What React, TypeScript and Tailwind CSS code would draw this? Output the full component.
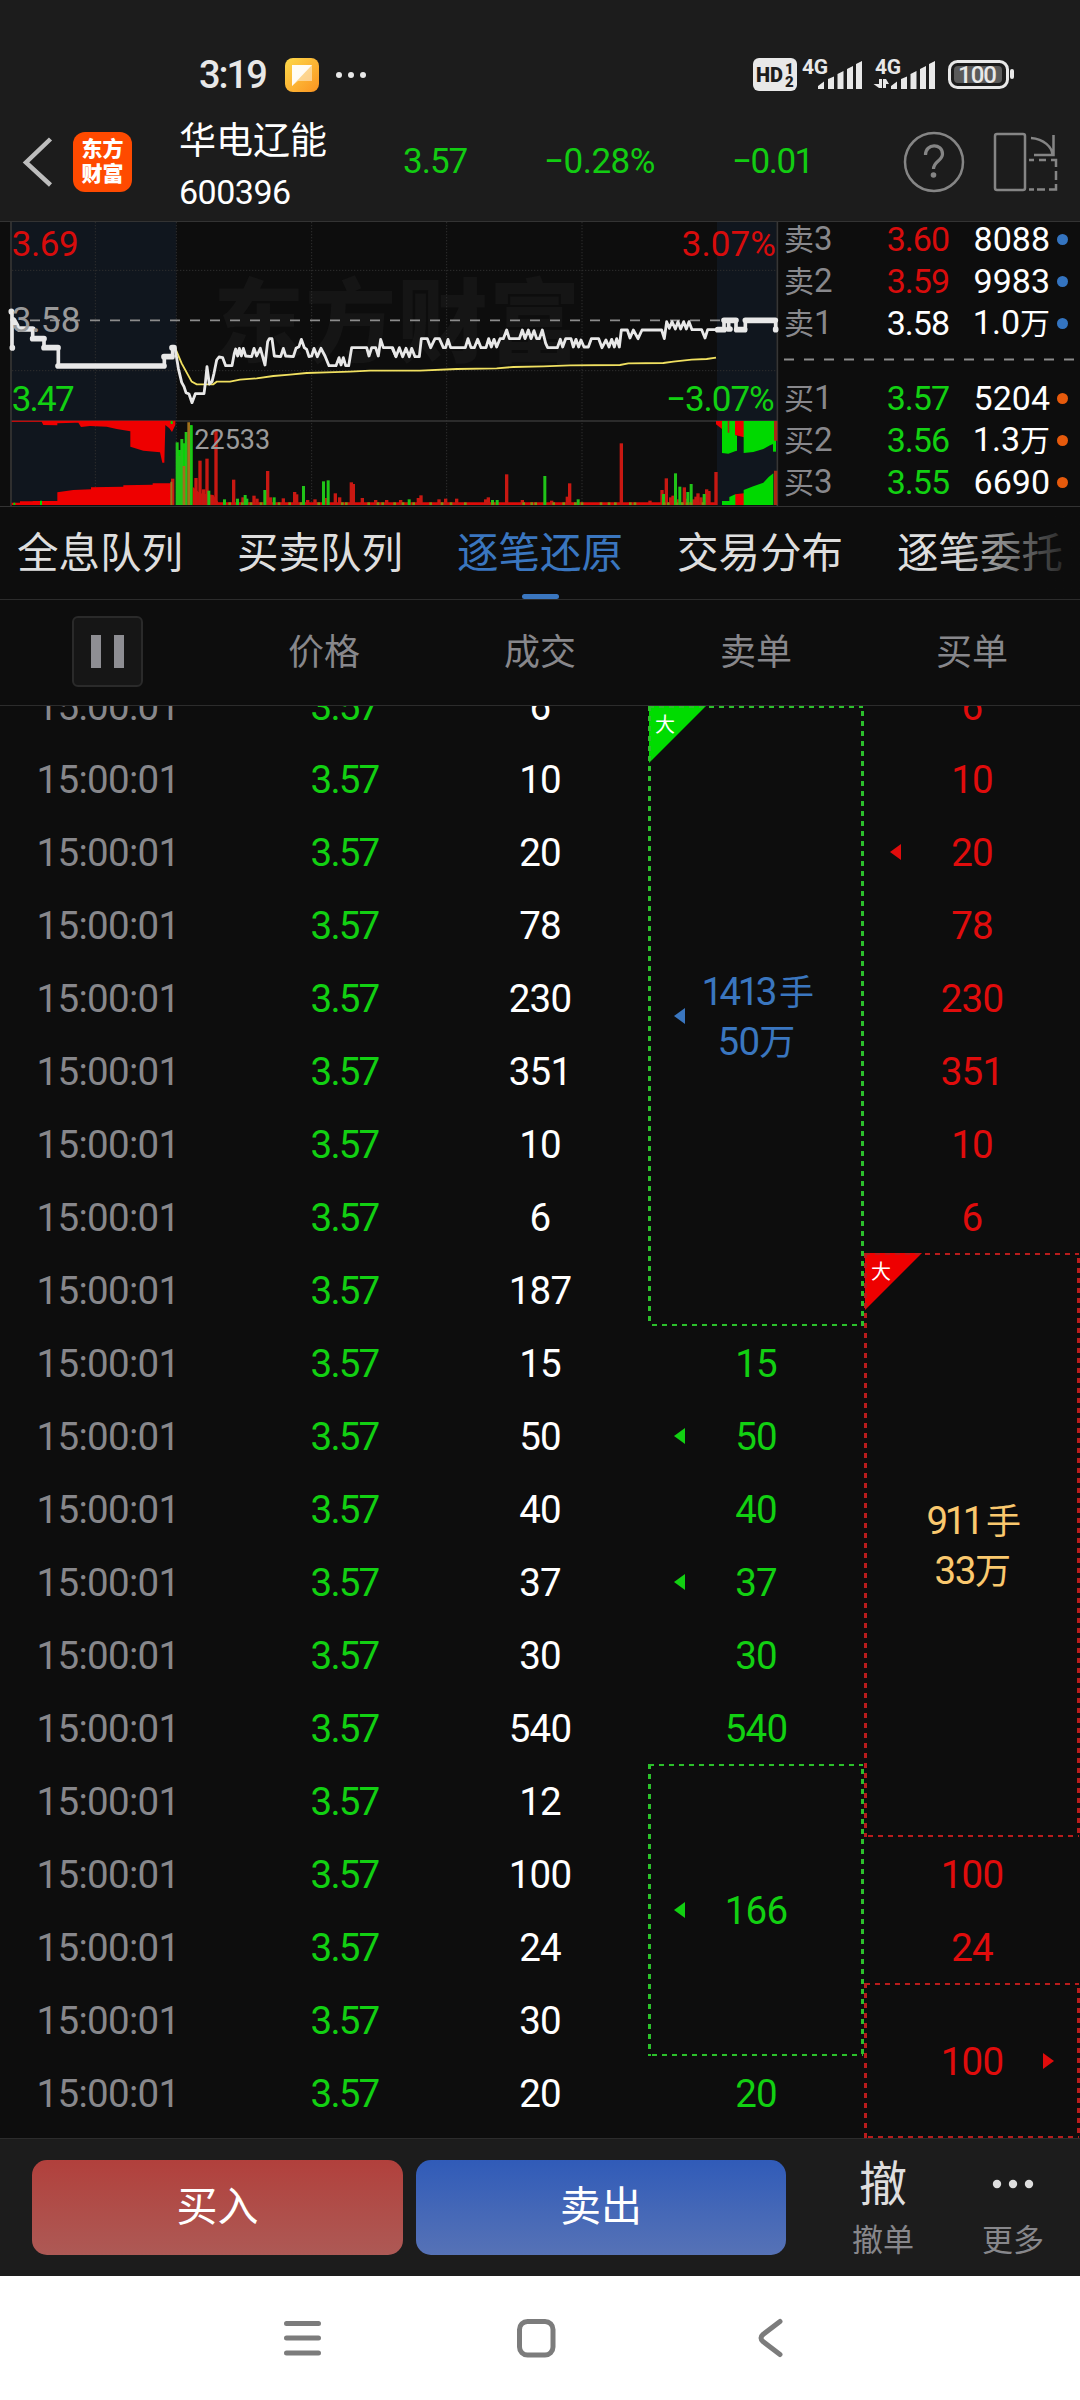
import type { ReactNode } from "react";
import clsx from "clsx";

const trades = [6, 10, 20, 78, 230, 351, 10, 6, 187, 15, 50, 40, 37, 30, 540, 12, 100, 24, 30, 20];

const asks = [
  { label: "卖", level: 3, price: "3.60", volume: "8088", unit: "", color: "text-[#d80c0c]" },
  { label: "卖", level: 2, price: "3.59", volume: "9983", unit: "", color: "text-[#d80c0c]" },
  { label: "卖", level: 1, price: "3.58", volume: "1.0", unit: "万", color: "text-white" },
];

const bids = [
  { label: "买", level: 1, price: "3.57", volume: "5204", unit: "", color: "text-[#12d012]" },
  { label: "买", level: 2, price: "3.56", volume: "1.3", unit: "万", color: "text-[#12d012]" },
  { label: "买", level: 3, price: "3.55", volume: "6690", unit: "", color: "text-[#12d012]" },
];

// volume bars, [x, top]
const redBars = [
  [518, 806], [588, 804], [600, 752], [611, 838], [621, 746], [636, 856], [648, 662], [701, 809], [729, 862], [762, 857],
  [771, 866], [803, 783], [811, 862], [850, 865], [884, 846], [890, 853], [923, 870], [945, 868], [978, 864], [1006, 850],
  [1019, 862], [1054, 817], [1060, 822], [1087, 864], [1127, 870], [1160, 870], [1202, 870], [1255, 864], [1263, 856],
  [1317, 868], [1337, 866], [1370, 866], [1457, 868], [1465, 862], [1520, 793], [1567, 870], [1655, 872], [1702, 860],
  [1709, 820], [1864, 700], [1950, 872], [1986, 840], [1999, 805], [2012, 862], [2019, 857], [2034, 868], [2053, 832],
  [2062, 866], [2080, 868], [2088, 860], [2094, 850], [2103, 862], [2120, 838], [2127, 843], [2148, 786],
];

const greenBars = [
  [532, 697], [539, 738], [546, 687], [559, 666], [573, 646], [627, 842], [674, 868], [713, 866], [736, 855], [741, 866],
  [795, 840], [823, 862], [911, 828], [971, 814], [985, 811], [1228, 868], [1478, 870], [1492, 870], [1635, 798], [1735, 868],
  [1991, 852], [2027, 790], [2040, 830], [2064, 846], [2074, 822], [2113, 852],
];

const ticks = [
  688, 726, 752, 782, 836, 868, 902, 955, 1026, 1038, 1105, 1133, 1147, 1183, 1208, 1240, 1291, 1325, 1352, 1395, 1478,
  1570, 1594, 1606, 1660, 1690, 1725, 1745, 1802, 1826, 1845, 1890, 1904, 1992, 2004, 2030, 2046, 2060, 2072, 2108,
];

function StatusBar() {
  return (
    <div className="flex h-[114px] items-center pt-9 pr-[65px] pl-[199px] text-[#e8e8e8]">
      <span className="w-[66px] text-[38px] leading-none font-medium tracking-[-2px]">3:19</span>
      <svg className="ml-5" width="34" height="34" viewBox="0 0 34 34">
        <defs>
          <linearGradient id="app" x1="0" y1="0" x2="1" y2="1">
            <stop offset="0" stopColor="#fdd94a" />
            <stop offset="1" stopColor="#fb9320" />
          </linearGradient>
        </defs>
        <rect width="34" height="34" rx="8" fill="url(#app)" />
        <path d="M7 7H27V23H13L7 28Z" fill="#fff" opacity=".45" />
        <path d="M7 7H27L7 28Z" fill="#fff" opacity=".9" />
      </svg>
      <svg className="ml-4" width="32" height="8" fill="currentColor">
        <circle cx="4" cy="4" r="3" />
        <circle cx="16" cy="4" r="3" />
        <circle cx="28" cy="4" r="3" />
      </svg>
      <svg className="ml-auto overflow-visible" width="262" height="36" viewBox="753 57 262 36" fill="currentColor" fontFamily="Roboto">
        <rect x="753" y="58" width="44" height="33" rx="6" />
        <text x="756" y="82" fontSize="20" fontWeight="900" fill="#1c1c1c" textLength="27" lengthAdjust="spacingAndGlyphs">HD</text>
        <text x="785" y="74" fontSize="15" fontWeight="900" fill="#1c1c1c">1</text>
        <text x="785" y="87" fontSize="15" fontWeight="900" fill="#1c1c1c">2</text>
        <text x="802" y="74" fontSize="21" fontWeight="700" textLength="26">4G</text>
        <Signal x={818} />
        <text x="875" y="74" fontSize="21" fontWeight="700" textLength="26">4G</text>
        <path d="M879 79V88H882V79ZM873.5 84H879V88ZM883 79H886V88H883ZM886 79L889 84H886Z" />
        <Signal x={891} />
        <rect x="949.5" y="61.5" width="58" height="26" rx="8" fill="none" stroke="currentColor" strokeWidth="3" />
        <rect x="954" y="66" width="48" height="17" rx="4" fill="#5a5a5a" />
        <rect x="1010" y="69" width="4" height="10" rx="2" />
        <text x="958" y="83" fontSize="24" fontWeight="500" textLength="39">100</text>
      </svg>
    </div>
  );
}

function Signal({ x }: { x: number }) {
  return (
    <g transform={`translate(${x} 0)`}>
      <path d="M0 89V86L6 81.500V89ZM10 89V79L16 76.500V89ZM19.500 89V74L25.500 71V89ZM29 89V69L35 66V89ZM38 89V64L44 61V89Z" />
    </g>
  );
}

function StockHeader() {
  return (
    <div className="flex h-[95px] items-center">
      <svg className="ml-[22px]" width="32" height="54" fill="none" stroke="#bdbdbd" strokeWidth="4.500">
        <path d="M28.500 4L4 27.500L28.500 50" />
      </svg>
      <div className="ml-[19px] flex h-[60px] w-[59px] flex-col items-center justify-center rounded-xl bg-[#ff4a00] text-[21px] leading-[25px] font-black text-white">
        <span>东方</span>
        <span>财富</span>
      </div>
      <div className="mt-2 ml-[47px] w-[224px] text-white">
        <div className="text-[37px] leading-[52px]">华电辽能</div>
        <div className="text-[34px] leading-[48px] tracking-[-0.5px]">600396</div>
      </div>
      <div className="mt-px flex text-[35px] text-[#12cc12]">
        <span className="w-[141px] tracking-[-1px]">3.57</span>
        <span className="w-[188px] tracking-[-0.500px] whitespace-nowrap">−0.28%</span>
        <span className="w-[171px] tracking-[-1.500px] whitespace-nowrap">−0.01</span>
      </div>
      <svg width="160" height="66" viewBox="903 129 160 66" fill="none" stroke="#858585" strokeWidth="2.500">
        <circle cx="934" cy="162" r="29" />
        <path d="M925.500 155C925.500 143 942.500 143 942.500 154C942.500 161 933.500 161 933.500 169" strokeWidth="3.200" />
        <circle cx="933.500" cy="175" r="2.800" fill="#858585" stroke="none" />
        <rect x="995" y="134" width="30" height="56" rx="2" />
        <path d="M1031 138C1044 139 1052 147 1052.500 155M1053.500 135V155H1034M1029 160H1034M1039 160H1046M1051 160H1056V167M1056 171V180M1056 184V189.500H1049M1045 189.500H1037M1034 189.500H1029" />
      </svg>
    </div>
  );
}

function PriceChart() {
  return (
    <svg width="778" height="284" viewBox="0 36 2334 852" fontFamily="Roboto" className="shrink-0 overflow-visible">
      <rect x="36" y="36" width="493" height="850" fill="#10161e" />
      <rect x="2151" y="36" width="178" height="850" fill="#10161e" />
      <text x="640" y="435" fontSize="272" fontWeight="900" fill="#151515" fontFamily="'Noto Sans CJK SC', sans-serif" textLength="1100">东方财富</text>
      <g stroke="#2e2e2e" strokeWidth="3" strokeDasharray="4 5">
        <path d="M36 181H2328M36 482H2328M286 36V885M529 36V885M935 36V885M1340 36V885M1746 36V885" />
      </g>
      <path d="M33 36V888M2332 36V888M33 633H2332" stroke="#363636" strokeWidth="5" />
      <path d="M90 331H2210" stroke="#8c8c8c" strokeWidth="5" strokeDasharray="30 30" />

      <g fill="#ee0000">
        <path d="M35 632H526V645L516 666L508 655L496 645L493 758H487L480 727L430 722L391 710V664L350 657L320 650L270 648L243 651L235 638H225L172 640V646L130 645L125 635H35Z" />
        <path d="M35 885V878H60V874H98V873H172V847L220 840L273 838V832L370 830V826L458 824V820H515V885Z" />
        <path d="M2148 633H2166V657L2148 643Z" />
        <path d="M2205 633H2232V682L2205 675ZM2205 885V853L2232 850V885Z" />
      </g>
      <g fill="#00d900">
        <path d="M2166 633H2205V724L2185 731L2166 729ZM2231 633H2325V700L2310 706L2290 717L2260 726L2231 729Z" />
        <path d="M2205 675L2211 677V722L2205 724Z" />
        <path d="M2166 885V873H2188V861L2206 853V885ZM2231 885V840L2260 829L2290 818L2306 801L2320 790V885Z" />
        <path d="M512 633H518V642H512ZM120 872H126V885H120ZM40 878H46V885H40Z" />
        <path d="M2319 690H2328V725H2319Z" />
      </g>
      <path d="M2183 633H2188V668H2183ZM2322 633H2332V692H2322ZM2322 782H2332V885H2322Z" fill="#a82a14" />
      <path d="M529 885V720H545V700H556V885ZM570 885V646H578V885Z" fill="#00d900" />
      <path d="M578 885V830L600 850L640 855L655 877H2150V885Z" fill="#dc0c08" />
      {redBars.map(([x, top]) => (
        <rect key={x} x={x - 5} y={top} width="10" height={885 - top} fill="#c81812" />
      ))}
      {greenBars.map(([x, top]) => (
        <rect key={x} x={x - 5} y={top} width="9" height={885 - top} fill="#20c418" />
      ))}
      {ticks.map((x) => (
        <rect key={x} x={x - 3} y="877" width="8" height="8" fill="#7f9410" />
      ))}
      <path d="M511 815H517V885H511ZM548 768H556V885H548ZM562 637H570V885H562Z" fill="#a0701c" />

      <path
        d="M525 413L545 460L575 515L590 523H640L650 515H690L720 509L770 505L820 498L870 494L920 489L980 487L1050 485L1110 482H1260L1370 477L1490 475L1540 471L1630 469L1710 466L1860 465L1885 460L1990 459L2020 455L2075 449L2120 447L2148 443"
        fill="none" stroke="#f0e060" strokeWidth="5.500"
      />
      <g fill="none" stroke="#e8e8e8" strokeWidth="8.500" strokeLinejoin="round">
        <path d="M525 413L535 475L545 517L552 530L558 548L567 552L576 578L586 551H612L616 520L621 470L628 522L636 515L642 490L650 450L657 441L668 443L677 467H696L703 430L707 417L713 438L718 415L724 438L730 415L737 438L755 440L762 415L770 438L781 415L788 440L795 465L803 395L808 386H816L823 438L842 440L850 415L857 438L880 440L888 415L897 410L904 388L913 413L920 418L927 440L935 438L942 415L952 440L963 415L975 438L987 467H1008L1017 443L1023 465L1030 443L1037 467H1046L1055 413H1100L1107 438L1115 413H1127L1135 438L1142 388L1150 413H1178L1188 440" />
        <g transform="translate(1170 0)">
          <path d="M6 413L18 440L28 413L38 440L48 415L58 440L65 415L75 440H88L94 386H112L122 413L135 386H148L160 413H167L174 388L182 413H226L234 386L243 413H253L263 388L273 413H288L296 386L304 411L312 388L320 411L330 386H340L350 360L358 386H388L397 360L405 386L415 360L423 386L432 362L440 386H448L457 360L467 400L473 413H502L511 388L518 411L527 386H543L550 411L558 388L566 411L573 390L582 411H595L604 386H626L636 413L648 390L657 411L665 388L673 411L680 386L688 411L694 360H712L720 384L730 360L744 386L756 360H815L823 386L830 335L838 355L846 335L856 357L864 335L872 357L881 335L889 357L897 335L906 359H935L945 384L953 359H980" />
        </g>
      </g>
      <g fill="none" stroke="#e8e8e8" strokeWidth="17" strokeLinejoin="round" strokeLinecap="round">
        <path d="M58 357H98M98 386H132M132 413H174M174 468H492M492 440H516M516 413H522" />
        <path d="M2153 359H2172M2172 331H2208M2186 357H2190M2210 359H2234M2236 331H2326M2327 357V359" />
        <path d="M34 304V305M37 413V414M40 330L50 348" />
      </g>
      <path d="M36 304V413M98 357V386M132 386V413M175 413V468M493 468V440M518 440V413M2172 331V359M2186 331V359M2208 331V359M2236 331V359M2327 331V359" stroke="#e8e8e8" strokeWidth="11" />

      <g fontSize="105">
        <text x="35" y="138" fill="#d80c0c" textLength="201">3.69</text>
        <text x="35" y="367" fill="#9a9a9a" textLength="206">3.58</text>
        <text x="35" y="603" fill="#12d012" textLength="189">3.47</text>
        <text x="2045" y="138" fill="#d80c0c" textLength="283">3.07%</text>
        <text x="1998" y="603" fill="#12d012" textLength="326">−3.07%</text>
        <text x="583" y="717" fill="#9a9a9a" fontSize="81">22533</text>
      </g>
    </svg>
  );
}

function QuoteRow({ quote, dot }: { quote: (typeof asks)[number]; dot: string }) {
  return (
    <div className="flex h-[42px] items-center">
      <span className="w-[60px] text-[30px] leading-[42px] text-[#88888c]">
        {quote.label}
        <span className="text-[33px]">{quote.level}</span>
      </span>
      <span className={clsx("w-[105px] text-right text-[34px] leading-[42px] tracking-[-1px]", quote.color)}>{quote.price}</span>
      <span className="w-[101px] text-right text-[34px] leading-[42px] whitespace-nowrap text-white">
        {quote.volume}
        {quote.unit && <span className="text-[30px]">{quote.unit}</span>}
      </span>
      <span className={clsx("ml-[7px] size-[11px] rounded-full", dot)} />
    </div>
  );
}

function OrderBook() {
  return (
    <div className="flex flex-col pl-1.5">
      <div className="-mt-1">
        {asks.map((quote) => (
          <QuoteRow key={quote.level} quote={quote} dot="bg-[#3474c0]" />
        ))}
      </div>
      <svg className="mt-[14px] mb-4" width="291" height="3">
        <path d="M0 1.500H291" stroke="#8c8c8c" strokeWidth="2" strokeDasharray="10 10" />
      </svg>
      {bids.map((quote) => (
        <QuoteRow key={quote.level} quote={quote} dot="bg-[#e65a0c]" />
      ))}
    </div>
  );
}

function Tabs() {
  const tabs = ["全息队列", "买卖队列", "逐笔还原", "交易分布", "逐笔委托"];
  return (
    <div className="relative flex h-[93px] gap-[54px] border-b border-[#2c2c2c] pl-[17px] text-[41.500px] text-[#dedede]">
      {tabs.map((tab) => (
        <div key={tab} className={clsx("flex w-[166px] shrink-0 flex-col items-center whitespace-nowrap", tab === "逐笔还原" && "text-[#3a76bf]")}>
          <span className="h-[87px] leading-[93px]">{tab}</span>
          {tab === "逐笔还原" && <span className="h-[5px] w-[37px] rounded-full bg-[#3a76bf]" />}
        </div>
      ))}
      <div className="absolute top-0 right-0 h-[90px] w-[130px] bg-linear-to-r from-transparent to-[#0d0d0d]" />
    </div>
  );
}

function ColumnTitles() {
  return (
    <div className="grid h-[106px] grid-cols-5 items-center border-b border-[#2c2c2c] text-center text-[36px] text-[#87878b]">
      <div className="mb-0.5 ml-[72px] flex h-[71px] w-[71px] items-center justify-center gap-[13px] rounded-md border-2 border-[#2a2a2a] bg-[#161616]">
        <span className="h-[33px] w-[10px] bg-[#8e8e93]" />
        <span className="h-[33px] w-[10px] bg-[#8e8e93]" />
      </div>
      <span>价格</span>
      <span>成交</span>
      <span>卖单</span>
      <span>买单</span>
    </div>
  );
}

function Arrow({ right = false }: { right?: boolean }) {
  return (
    <svg className={clsx("absolute top-1/2 -translate-y-1/2", right ? "right-[26px] rotate-180" : "left-[26px]")} width="11" height="16">
      <path d="M0 8L11 0V16Z" fill="currentColor" />
    </svg>
  );
}

function Cell({ children, arrow = false }: { children?: ReactNode; arrow?: boolean }) {
  return (
    <div className="relative flex h-[73px] items-center justify-center pt-[3px]">
      {arrow && <Arrow />}
      {children}
    </div>
  );
}

// one order filled over several trades
function OrderBox({ className, big = false, stroke, fill, children }: { className: string; big?: boolean; stroke: string; fill?: string; children: ReactNode }) {
  return (
    <div className={clsx("relative flex shrink-0 flex-col items-center justify-center pt-0.5 leading-[48px]", className)}>
      <svg className="absolute inset-0 h-full w-full">
        {big && <path d="M1 0H58L1 57Z" fill={fill} />}
        <path d="M1 1H215" stroke={stroke} strokeWidth="2" strokeDasharray="5 5" />
        <line x1="1.500" y1="0" x2="1.500" y2="100%" stroke={stroke} strokeWidth="3" strokeDasharray="5 5" />
        <line x1="214.500" y1="5" x2="214.500" y2="100%" stroke={stroke} strokeWidth="3" strokeDasharray="5 5" />
        <svg y="100%" overflow="visible">
          <path d="M4 -1H215" stroke={stroke} strokeWidth="2" strokeDasharray="5 5" />
        </svg>
      </svg>
      {big && <span className="absolute top-[7px] left-[7px] text-[20px] leading-6 text-white">大</span>}
      {children}
    </div>
  );
}

function TradeList() {
  return (
    <div className="grid h-[1432px] grid-cols-5 overflow-hidden text-[38.500px]">
      <div className="-mt-[37px] tracking-[-0.700px] text-[#87878b]">
        {trades.map((_, i) => (
          <Cell key={i}>15:00:01</Cell>
        ))}
      </div>
      <div className="-mt-[37px] pl-[41px] tracking-[-1.800px] text-[#12d012]">
        {trades.map((_, i) => (
          <Cell key={i}>3.57</Cell>
        ))}
      </div>
      <div className="-mt-[37px] tracking-[-0.800px] text-white">
        {trades.map((count, i) => (
          <Cell key={i}>{count}</Cell>
        ))}
      </div>
      <div className="flex flex-col tracking-[-0.800px] text-[#12d012]">
        <OrderBox className="h-[620px] text-[#3a76bf]" big stroke="#2bc02b" fill="#00dc00">
          <Arrow />
          <span className="tracking-[-3.500px]">1413<span className="ml-[5px] text-[35px]">手</span></span>
          <span>50<span className="text-[36px]">万</span></span>
        </OrderBox>
        <Cell>15</Cell>
        <Cell arrow>50</Cell>
        <Cell>40</Cell>
        <Cell arrow>37</Cell>
        <Cell>30</Cell>
        <Cell>540</Cell>
        <OrderBox className="h-[292px]" stroke="#2bc02b">
          <Arrow />
          <span>166</span>
        </OrderBox>
        <Cell>20</Cell>
      </div>
      <div className="-mt-[37px] flex flex-col tracking-[-0.800px] text-[#e00c0c]">
        {trades.slice(0, 8).map((count, i) => (
          <Cell key={i} arrow={i === 2}>{count}</Cell>
        ))}
        <OrderBox className="h-[584px] text-[#fac86e]" big stroke="#b81c1c" fill="#ee0000">
          <span className="tracking-[-3.500px]">911<span className="ml-[5px] text-[35px]">手</span></span>
          <span className="tracking-[-1.500px]">33<span className="text-[36px]">万</span></span>
        </OrderBox>
        <Cell>100</Cell>
        <Cell>24</Cell>
        <OrderBox className="h-[155px]" stroke="#b81c1c">
          <span>100</span>
          <Arrow right />
        </OrderBox>
      </div>
    </div>
  );
}

function BottomBar() {
  return (
    <div className="flex h-[138px] border-t border-[#2c2c2c] bg-[#1c1c1c] pt-[21px] pl-8">
      <button className="mr-[13px] h-[95px] w-[371px] rounded-[15px] bg-linear-to-b from-[#b1403c] to-[#ad5955] pt-px text-[41px] text-white">买入</button>
      <button className="h-[95px] w-[370px] rounded-[15px] bg-linear-to-b from-[#305bb8] to-[#5672b6] pt-px text-[41px] text-white">卖出</button>
      <div className="ml-[31px] flex w-[132px] flex-col items-center text-[#dedede]">
        <span className="mt-px text-[48px] leading-[48px]">撤</span>
        <span className="mt-[13px] text-[31px] leading-[38px] text-[#87878b]">撤单</span>
      </div>
      <div className="flex w-[128px] flex-col items-center text-[#dedede]">
        <svg width="42" height="48" fill="currentColor">
          <circle cx="5" cy="24" r="4.200" />
          <circle cx="21" cy="24" r="4.200" />
          <circle cx="37" cy="24" r="4.200" />
        </svg>
        <span className="mt-3.5 text-[31px] leading-[38px] text-[#87878b]">更多</span>
      </div>
    </div>
  );
}

function NavBar() {
  return (
    <div className="flex h-[124px] items-center bg-white pl-[284px]">
      <svg width="500" height="44" fill="none" stroke="#7c7c7c" strokeWidth="5" strokeLinecap="round" strokeLinejoin="round">
        <path d="M2.500 7.500H34.500M2.500 22H34.500M2.500 37H34.500" />
        <rect x="235.500" y="5.500" width="33.500" height="33.500" rx="8" />
        <path d="M496 5.500L479 18.500Q475 22 479 25.500L496 38.500" />
      </svg>
    </div>
  );
}

export default function App() {
  return (
    <main className="w-[1080px] overflow-hidden bg-[#0d0d0d] font-[Roboto,'Noto_Sans_CJK_SC',sans-serif]">
      <div className="h-[222px] border-b border-[#333] bg-[#1c1c1c]">
        <StatusBar />
        <StockHeader />
      </div>
      <div className="flex h-[285px] overflow-hidden border-b border-[#333]">
        <PriceChart />
        <OrderBook />
      </div>
      <Tabs />
      <ColumnTitles />
      <TradeList />
      <BottomBar />
      <NavBar />
    </main>
  );
}
